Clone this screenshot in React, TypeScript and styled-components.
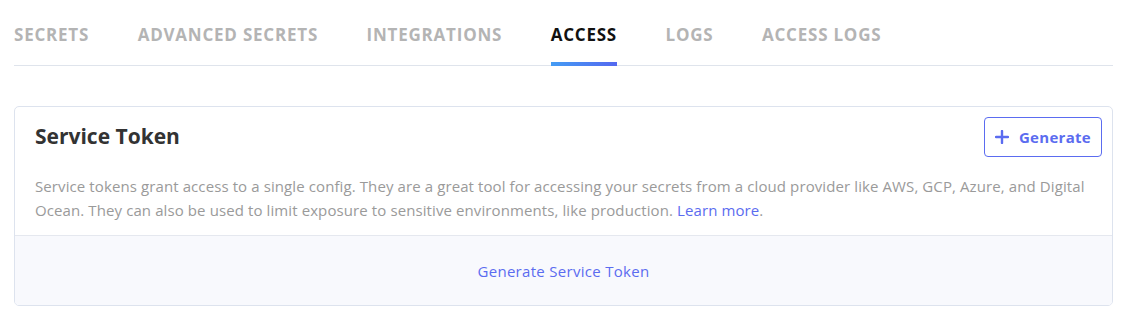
import React, { useState } from "react";
import styled, { createGlobalStyle } from "styled-components";

const GlobalStyle = createGlobalStyle`
    body {
        margin: 0;
        background: #ffffff;
        font-family: "Open Sans", "Noto Sans", sans-serif;
    }
`;

const Page = styled.div`
    padding: 0 12px 0 14px;
`;

const TabBar = styled.nav`
    display: flex;
    gap: 48.5px;
    border-bottom: 1px solid #dfe4ec;
    margin-bottom: 40px;
`;

const Tab = styled.button<{ $active?: boolean }>`
    position: relative;
    background: none;
    border: none;
    padding: 23px 0 19px;
    font-family: "Open Sans", sans-serif;
    font-size: 17px;
    font-weight: 700;
    letter-spacing: 0.78px;
    text-transform: uppercase;
    color: ${props => (props.$active ? "#111111" : "#b4b4b4")};
    cursor: pointer;

    &::after {
        content: "";
        display: ${props => (props.$active ? "block" : "none")};
        position: absolute;
        left: 0;
        right: 0;
        bottom: -1px;
        height: 4px;
        background: linear-gradient(90deg, #449cf4, #5468f0);
    }
`;

const Card = styled.section`
    border: 1px solid #dde3ee;
    border-radius: 5px;
    overflow: hidden;
`;

const CardBody = styled.div`
    padding: 10px 10px 13px 20px;
`;

const CardHeader = styled.div`
    display: flex;
    justify-content: space-between;
    align-items: flex-start;
`;

const Title = styled.h2`
    margin: 5px 0 0;
    font-size: 21px;
    font-weight: 700;
    color: #333333;
`;

const GenerateButton = styled.button`
    display: flex;
    align-items: center;
    gap: 10px;
    height: 40px;
    padding: 0 10px;
    background: #ffffff;
    border: 1px solid #5b6cf0;
    border-radius: 4px;
    color: #5b6cf0;
    font-family: "Open Sans", sans-serif;
    font-size: 15px;
    font-weight: 700;
    letter-spacing: 0.3px;
    cursor: pointer;
`;

const Description = styled.p`
    margin: 17px 0 0;
    font-size: 15px;
    letter-spacing: 0.1px;
    line-height: 24px;
    color: #9a9a9a;
`;

const Link = styled.a`
    color: #5b6cf0;
    text-decoration: none;
`;

const CardFooter = styled.div`
    display: flex;
    justify-content: center;
    align-items: center;
    height: 69px;
    background: #f8f9fd;
    border-top: 1px solid #e5e8ef;
`;

const FooterLink = styled.a`
    color: #5b6cf0;
    font-size: 15px;
    letter-spacing: 0.3px;
    text-decoration: none;
`;

const tabs = ["Secrets", "Advanced Secrets", "Integrations", "Access", "Logs", "Access Logs"];

const PlusIcon = () => (
    <svg width="14" height="14" viewBox="0 0 14 14">
        <path d="M7 1v12M1 7h12" stroke="currentColor" strokeWidth="2.4" strokeLinecap="round" />
    </svg>
);

const App = () => {
    const [selectedTab, setSelectedTab] = useState<number>(3);

    return (
        <Page>
            <GlobalStyle />
            <TabBar>
                {tabs.map((title, index) => (
                    <Tab key={title} $active={index === selectedTab} onClick={() => setSelectedTab(index)}>
                        {title}
                    </Tab>
                ))}
            </TabBar>
            <Card>
                <CardBody>
                    <CardHeader>
                        <Title>Service Token</Title>
                        <GenerateButton>
                            <PlusIcon />
                            Generate
                        </GenerateButton>
                    </CardHeader>
                    <Description>
                        Service tokens grant access to a single config. They are a great tool for accessing your secrets
                        from a cloud provider like AWS, GCP, Azure, and Digital
                        <br />
                        Ocean. They can also be used to limit exposure to sensitive environments, like
                        production. <Link href="#">Learn more</Link>.
                    </Description>
                </CardBody>
                <CardFooter>
                    <FooterLink href="#">Generate Service Token</FooterLink>
                </CardFooter>
            </Card>
        </Page>
    );
};

export default App;
